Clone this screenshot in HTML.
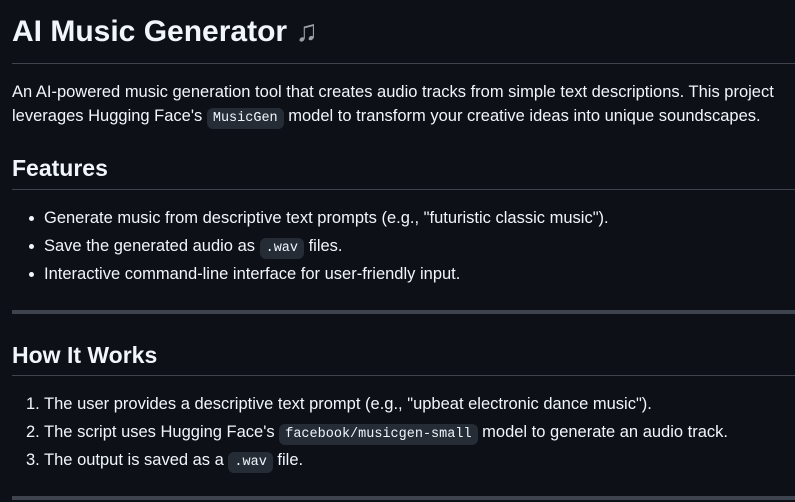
<!DOCTYPE html>
<html><head><meta charset="utf-8"><style>
body{margin:0;background:#0d1117;width:795px;height:502px;overflow:hidden;color:#f0f6fc;font-family:"Liberation Sans",sans-serif;font-size:16.5px;position:relative}
.a{position:absolute;left:12px;white-space:nowrap}
h1,h2{margin:0;font-weight:700;position:absolute;left:12px;white-space:nowrap}
h1{font-size:30px;top:15px}
h2{font-size:23px;top:155px}
.rule{position:absolute;left:12px;right:0;height:1px;background:#3d444d}
.hr{position:absolute;left:12px;right:0;height:4px;background:#3d444d}
code{font-family:"Liberation Mono",monospace;font-size:13.5px;background:#262c36;border-radius:6px;padding:3px 6px}
.li{position:absolute;left:44px;white-space:nowrap}
.dot{position:absolute;left:29px;width:5px;height:5px;border-radius:50%;background:#f0f6fc}
.n{position:absolute;left:26px;white-space:nowrap}
</style></head><body>
<h1>AI Music Generator <span style="color:#9aa0a6;font-weight:400">♫</span></h1>
<div class="rule" style="top:63px"></div>
<div class="a" style="top:83px">An AI-powered music generation tool that creates audio tracks from simple text descriptions. This project</div>
<div class="a" style="top:107px">leverages Hugging Face's <code>MusicGen</code> model to transform your creative ideas into unique soundscapes.</div>
<h2>Features</h2>
<div class="rule" style="top:189px"></div>
<div class="dot" style="top:216px"></div><div class="li" style="top:209px">Generate music from descriptive text prompts (e.g., "futuristic classic music").</div>
<div class="dot" style="top:244px"></div><div class="li" style="top:237px">Save the generated audio as <code>.wav</code> files.</div>
<div class="dot" style="top:272px"></div><div class="li" style="top:265px">Interactive command-line interface for user-friendly input.</div>
<div class="hr" style="top:310px"></div>
<h2 style="top:342px">How It Works</h2>
<div class="rule" style="top:375px"></div>
<div class="n" style="top:395px">1. The user provides a descriptive text prompt (e.g., "upbeat electronic dance music").</div>
<div class="n" style="top:423px">2. The script uses Hugging Face's <code>facebook/musicgen-small</code> model to generate an audio track.</div>
<div class="n" style="top:451px">3. The output is saved as a <code>.wav</code> file.</div>
<div class="hr" style="top:496px"></div>
</body></html>
